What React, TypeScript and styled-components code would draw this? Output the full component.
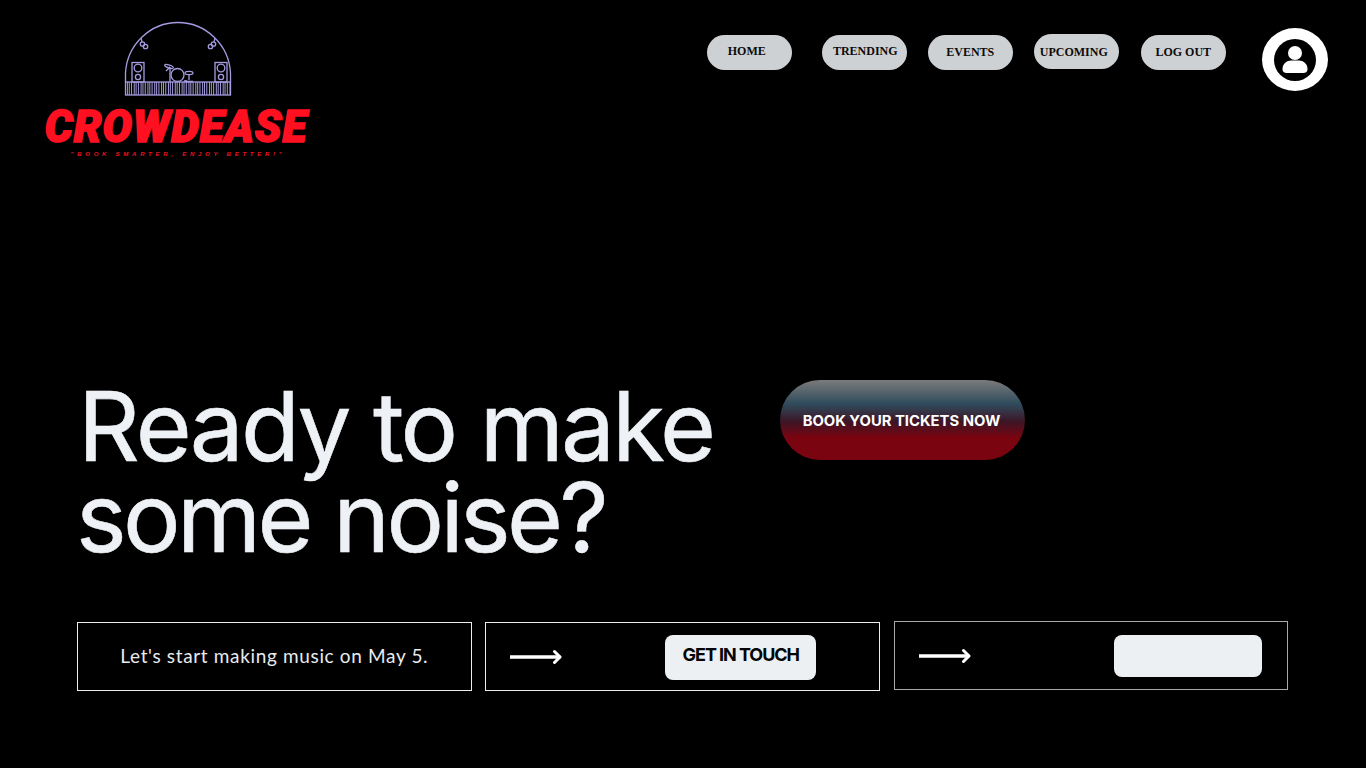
import styled, { createGlobalStyle } from "styled-components";

const GlobalStyle = createGlobalStyle`
  * {
    box-sizing: border-box;
  }
  body {
    margin: 0;
    background-color: #000;
    font-family: "Inter", "Liberation Sans", sans-serif;
  }
`;

const Page = styled.div`
  width: 1366px;
  height: 768px;
  overflow: hidden;
  background-color: #000;
`;

const Header = styled.header`
  height: 375px;
  display: flex;
  justify-content: space-between;
  align-items: flex-start;
  padding: 22px 38px 0 46px;
`;

const Logo = styled.div`
  width: 264px;
  display: flex;
  flex-direction: column;
  align-items: center;
`;

const StageArt = styled.svg`
  display: block;
  width: 120px;
  height: 85px;
  margin: -7px 0 0 4px;
`;

const Wordmark = styled.div`
  margin: 5px 4px 0 0;
  font-family: "Roboto", "Liberation Sans", sans-serif;
  font-size: 44px;
  font-weight: 900;
  font-style: italic;
  line-height: 44px;
  letter-spacing: 1px;
  color: #ff1021;
  -webkit-text-stroke: 1.6px #ff1021;
  white-space: nowrap;
`;

const Tagline = styled.div`
  margin-top: 1px;
  font-family: "Liberation Sans", sans-serif;
  font-size: 6px;
  font-weight: 700;
  font-style: italic;
  line-height: 8px;
  letter-spacing: 3.75px;
  color: #f01020;
  white-space: nowrap;
`;

const NavArea = styled.div`
  display: flex;
  align-items: flex-start;
`;

const Nav = styled.nav`
  display: flex;
  margin-top: 13px;
`;

const Pill = styled.a<{ $gap: number; $pad: string; $lift?: boolean }>`
  width: 85.5px;
  height: 35px;
  margin-left: ${(p) => p.$gap}px;
  margin-top: ${(p) => (p.$lift ? -1 : 0)}px;
  padding: ${(p) => p.$pad};
  display: flex;
  align-items: center;
  justify-content: center;
  border-radius: 18px;
  background-color: #ced1d4;
  color: #0b0b0b;
  font-family: "Liberation Serif", serif;
  font-size: 12px;
  font-weight: 700;
  white-space: nowrap;
`;

const Avatar = styled.div`
  width: 66px;
  height: 63px;
  margin: 6px 0 0 36px;
  display: flex;
  align-items: center;
  justify-content: center;
  border-radius: 50%;
  background-color: #fff;
`;

const Hero = styled.section`
  height: 247px;
  display: flex;
  align-items: flex-start;
  padding: 0 0 0 78px;
`;

const Title = styled.h1`
  width: 702px;
  margin: 0;
  padding-top: 6px;
  font-family: "Inter", sans-serif;
  font-size: 96px;
  font-weight: 400;
  line-height: 91px;
  color: #eef1f5;
`;

const TitleLine = styled.span<{ $spacing: number; $left: number }>`
  display: block;
  margin-left: ${(p) => p.$left}px;
  letter-spacing: ${(p) => p.$spacing}px;
  -webkit-text-stroke: 0.6px #eef1f5;
  white-space: nowrap;
`;

const BookButton = styled.button`
  width: 245px;
  height: 80px;
  margin-top: 5px;
  padding: 2px 2px 0 0;
  border: 0;
  border-radius: 40px;
  background: linear-gradient(
    180deg,
    #7b7b7b 0%,
    #2f4b5c 30%,
    #3c1526 52%,
    #7a0410 72%,
    #7a0410 100%
  );
  color: #fff;
  font-family: "Inter", sans-serif;
  font-size: 14.8px;
  font-weight: 700;
  white-space: nowrap;
`;

const Strip = styled.section`
  display: flex;
  gap: 13.75px;
  padding-left: 77px;
`;

const Card = styled.div<{ $dim?: boolean }>`
  width: 394.5px;
  height: 69px;
  margin-top: ${(p) => (p.$dim ? -1 : 0)}px;
  display: flex;
  align-items: center;
  border: 1px solid ${(p) => (p.$dim ? "#a8a8a8" : "#ececec")};
`;

const CardText = styled.p`
  width: 100%;
  margin: 0;
  padding-bottom: 2px;
  text-align: center;
  font-family: "Lato", sans-serif;
  font-size: 19px;
  letter-spacing: 0.65px;
  color: #e8ebef;
`;

const Arrow = styled.svg`
  display: block;
  width: 52px;
  height: 16px;
  margin-left: 24px;
  flex-shrink: 0;
`;

const CardButton = styled.a<{ $width: number; $height: number; $left: number }>`
  width: ${(p) => p.$width}px;
  height: ${(p) => p.$height}px;
  margin-left: ${(p) => p.$left}px;
  margin-top: 1px;
  padding-bottom: 5px;
  display: flex;
  align-items: center;
  justify-content: center;
  border-radius: 8px;
  background-color: #ecf0f3;
  color: #050505;
  font-family: "Inter", sans-serif;
  font-size: 18px;
  font-weight: 700;
  letter-spacing: -1.05px;
  white-space: nowrap;
`;

const barcodeLines = Array.from({ length: 46 }, (_, i) => 7 + i * 2.28 + (i % 3 === 0 ? 0.4 : 0));

const StageLogo = () => (
  <StageArt viewBox="0 0 120 85" fill="none" stroke="#a49ce0" strokeWidth="1.3">
    <path d="M5.5 67V58C7 30 30 7.5 58 7.5C86 7.5 109 30 110.5 58V67" />
    <rect x="5.5" y="67" width="105" height="13" />
    {barcodeLines.map((x) => (
      <line key={x} x1={x} y1="67" x2={x} y2="80" strokeWidth="1" />
    ))}
    <rect x="12" y="47.5" width="12" height="19.5" />
    <circle cx="18" cy="53" r="3.8" />
    <circle cx="18" cy="62" r="2.6" />
    <rect x="95" y="47.5" width="12" height="19.5" />
    <circle cx="101" cy="53" r="3.8" />
    <circle cx="101" cy="62" r="2.6" />
    <path d="M21 23L22 27" />
    <circle cx="22.5" cy="29" r="2.2" />
    <circle cx="25.5" cy="31.5" r="2.2" />
    <path d="M95 23L94 27" />
    <circle cx="93.5" cy="29" r="2.2" />
    <circle cx="90.5" cy="31.5" r="2.2" />
    <circle cx="57.5" cy="60" r="6.5" />
    <ellipse cx="49" cy="51.5" rx="4.5" ry="1.4" transform="rotate(18 49 51.5)" />
    <path d="M50 52V67M46 56L50 52M64 66H67" />
    <ellipse cx="69" cy="58" rx="4" ry="1.6" />
    <path d="M69 60V65M65 66.5H73" />
  </StageArt>
);

const LongArrow = () => (
  <Arrow viewBox="0 0 52 16" fill="none" stroke="#fff" strokeLinecap="round" strokeLinejoin="round">
    <path d="M0.5 8H49.5" strokeWidth="3.4" />
    <path d="M44.5 2.5L50 8L44.5 13.5" strokeWidth="3" />
  </Arrow>
);

const UserGlyph = () => (
  <svg width="42" height="42" viewBox="0 0 42 42">
    <circle cx="21" cy="21" r="21" fill="#000" />
    <circle cx="21" cy="14" r="7" fill="#fff" />
    <path d="M8.5 30C8.5 24.5 13 21.5 17 21.5H25C29 21.5 33.5 24.5 33.5 30C33.5 33 31.5 34 29 34H13C10.5 34 8.5 33 8.5 30Z" fill="#fff" />
  </svg>
);

const navItems = [
  { label: "HOME", gap: 0, pad: "0 5px 2px 0" },
  { label: "TRENDING", gap: 29.5, pad: "0 0 2px 2px" },
  { label: "EVENTS", gap: 20.5, pad: "0" },
  { label: "UPCOMING", gap: 20.5, pad: "2px 5px 0 0", lift: true },
  { label: "LOG OUT", gap: 21.5, pad: "0" },
];

export default function App() {
  return (
    <Page>
      <GlobalStyle />
      <Header>
        <Logo>
          <StageLogo />
          <Wordmark>CROWDEASE</Wordmark>
          <Tagline>"BOOK SMARTER, ENJOY BETTER!"</Tagline>
        </Logo>
        <NavArea>
          <Nav>
            {navItems.map((item) => (
              <Pill key={item.label} $gap={item.gap} $pad={item.pad} $lift={item.lift}>
                {item.label}
              </Pill>
            ))}
          </Nav>
          <Avatar>
            <UserGlyph />
          </Avatar>
        </NavArea>
      </Header>
      <Hero>
        <Title>
          <TitleLine $spacing={-2.75} $left={0}>
            Ready to make
          </TitleLine>
          <TitleLine $spacing={-3.6} $left={-2}>
            some noise?
          </TitleLine>
        </Title>
        <BookButton>BOOK YOUR TICKETS NOW</BookButton>
      </Hero>
      <Strip>
        <Card>
          <CardText>Let's start making music on May 5.</CardText>
        </Card>
        <Card>
          <LongArrow />
          <CardButton $width={151} $height={45} $left={103}>
            GET IN TOUCH
          </CardButton>
        </Card>
        <Card $dim>
          <LongArrow />
          <CardButton $width={148} $height={42} $left={143} />
        </Card>
      </Strip>
    </Page>
  );
}
